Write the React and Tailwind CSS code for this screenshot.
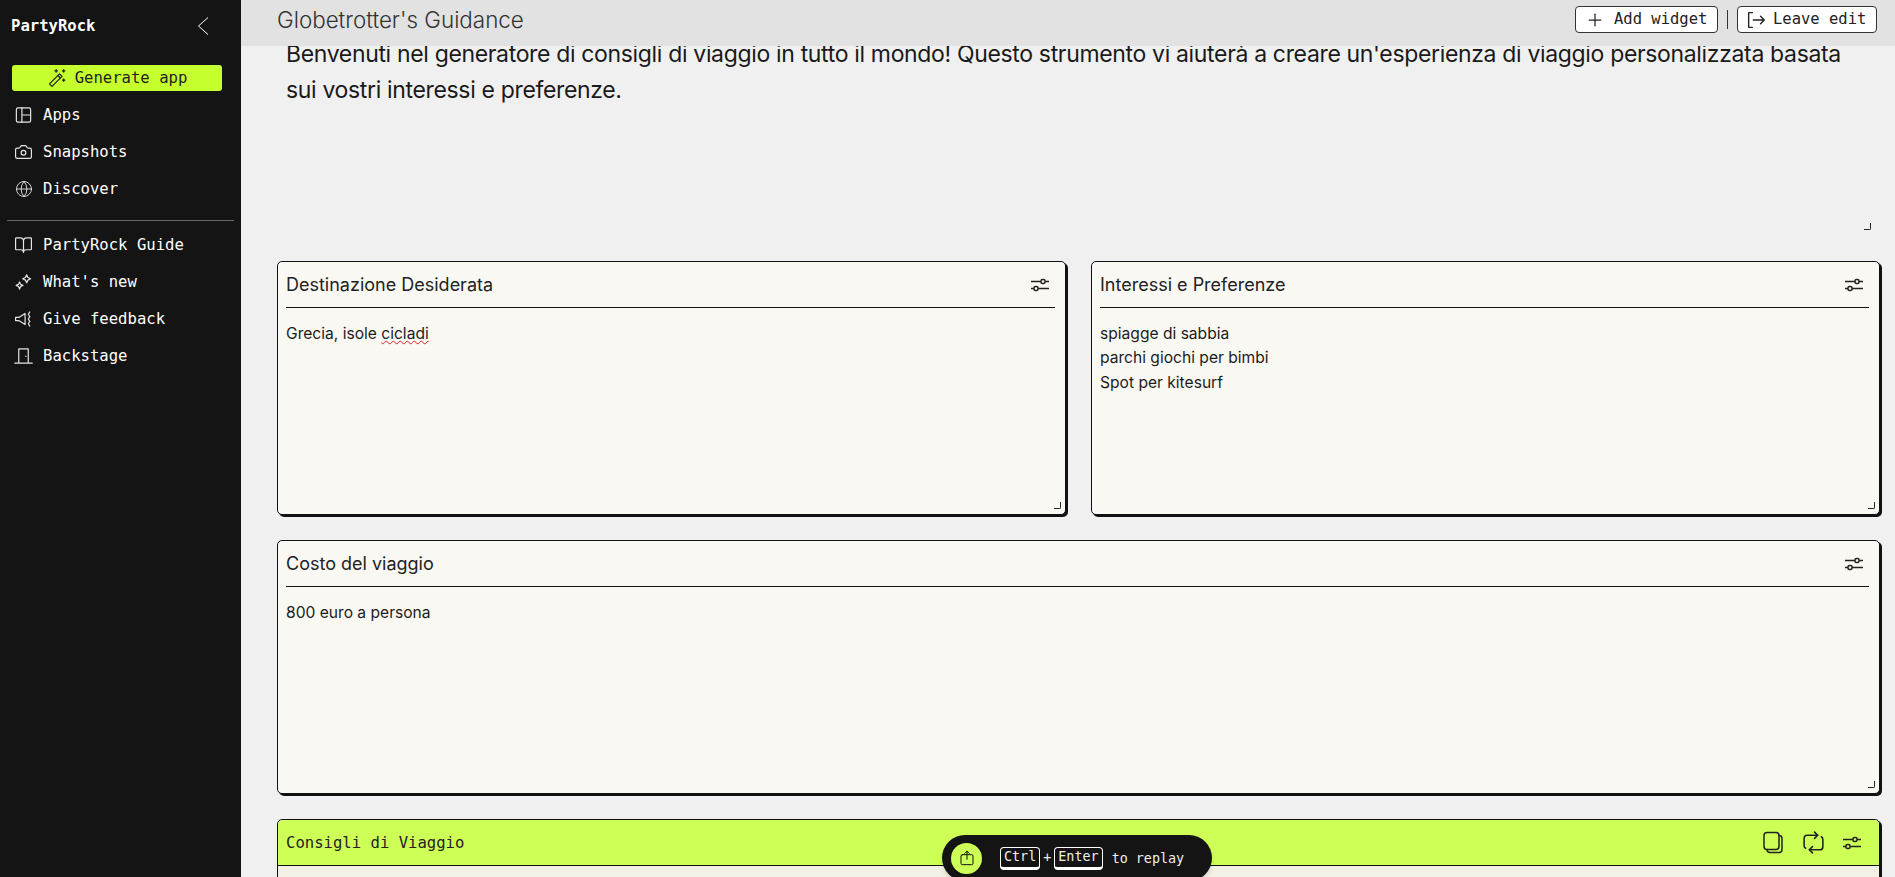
import { Camera, Globe, BookOpen, Plus } from "lucide-react";

const mono = "font-['DejaVu_Sans_Mono',monospace]";
const sans = "font-['Inter','Noto_Sans',sans-serif]";

const Icon = ({ children, className = "w-[20px] h-[20px]" }) => (
  <svg
    viewBox="0 0 24 24"
    fill="none"
    stroke="currentColor"
    strokeWidth="1.5"
    strokeLinecap="round"
    strokeLinejoin="round"
    className={className}
  >
    {children}
  </svg>
);

const AppsIcon = () => (
  <Icon>
    <rect x="3" y="3" width="18" height="18" rx="2" />
    <path d="M10 3v18M10 12h11" />
  </Icon>
);
const SparkleIcon = () => (
  <Icon>
    <path d="M16 3l1.600 3.400L21 8l-3.400 1.600L16 13l-1.600-3.400L11 8l3.400-1.600z" />
    <path d="M7 12l1.300 3 3 1.300-3 1.300L7 21l-1.300-3.400-3-1.300 3-1.300z" />
  </Icon>
);
const MegaphoneIcon = () => (
  <Icon>
    <path d="M2 10h4l8-5v14l-8-5H2z" />
    <path d="M20 3l-2 3 2 3-2 3 2 3-2 3 2 3" />
  </Icon>
);
const DoorIcon = () => (
  <Icon>
    <path d="M1 21h22M6 21V3h12v18" />
    <path d="M15 12v.5" />
  </Icon>
);
const WandIcon = () => (
  <Icon>
    <path d="M3 19L15 7l3 3L6 22z" />
    <path d="M13 9l3 3" />
    <path d="M11 2v3M9.500 3.500h3M20 2v3M18.500 3.500h3M20 13v3M18.500 14.500h3" />
  </Icon>
);
const ChevronIcon = () => (
  <svg viewBox="0 0 12 20" fill="none" stroke="currentColor" strokeWidth="1" className="w-[12px] h-[20px]">
    <path d="M11 1.500L1.500 10 11 18.500" />
  </svg>
);
const Sliders = () => (
  <svg viewBox="0 0 20 16" fill="none" stroke="currentColor" strokeWidth="1.5" className="w-[20px] h-[16px]">
    <path d="M1 4.500h10M15 4.500h4M1 11.500h3M8 11.500h11" />
    <rect x="11" y="2.500" width="4" height="4" rx="1.500" />
    <rect x="4" y="9.500" width="4" height="4" rx="1.500" />
  </svg>
);
const CopyIcon = () => (
  <Icon className="w-[24px] h-[25px]">
    <rect x="3" y="2" width="15" height="17" rx="3" />
    <path d="M18 5c2 0 3 1 3 3v11c0 2-1 3-3 3H9c-2 0-3-1-3-3" />
  </Icon>
);
const RepeatIcon = () => (
  <Icon className="w-[25px] h-[25px]">
    <path d="M13 2l3 3-3 3" />
    <path d="M16 5H6C4 5 3 6 3 8v7c0 1 .5 2 1.500 2.500" />
    <path d="M11 22l-3-3 3-3" />
    <path d="M8 19h10c2 0 3-1 3-3V9c0-1-.5-2-1.500-2.500" />
  </Icon>
);
const LeaveIcon = () => (
  <Icon className="w-[22px] h-[22px]">
    <path d="M8 4H4v16h4" />
    <path d="M9 12h12M17 8l4 4-4 4" />
  </Icon>
);
const ReplayIcon = () => (
  <Icon className="w-[16px] h-[16px]">
    <rect x="3" y="7" width="18" height="15" rx="2" />
    <path d="M12 14V2M8.500 5L12 2l3.500 3" />
  </Icon>
);

const NavItem = ({ icon, label }) => (
  <div className="flex items-center h-[37px] pl-[14px] gap-[10px] text-white">
    <span className="w-[19px] flex justify-center text-[#e5e5e5]">{icon}</span>
    <span className="pt-[3px]">{label}</span>
  </div>
);

const Handle = ({ className = "right-[4px] bottom-[5px]" }) => (
  <span className={`absolute w-[7px] h-[7px] border-r border-b border-[#222] rounded-br-[2px] ${className}`} />
);

const Card = ({ title, children, className = "h-[254px]" }) => (
  <div className={`relative bg-[#faf8f3] border border-[#111] rounded-[5px] shadow-[2px_2px_0_#111] pl-[8px] pr-[10px] ${className}`}>
    <div className="flex items-center justify-between h-[46px] border-b border-[#111] text-[18px] text-[#222]">
      <span>{title}</span>
      <span className="mr-[5px] text-[#222]"><Sliders /></span>
    </div>
    <div className="pt-[14px] text-[15.600px] leading-[24.400px] text-[#1c1c1c]">{children}</div>
    <Handle />
  </div>
);

export default function App() {
  return (
    <div className={`relative flex h-screen w-full overflow-hidden bg-[#f0f0f0] ${sans}`}>
      <aside className={`w-[241px] shrink-0 bg-[#141414] text-[15.600px] ${mono}`}>
        <div className="flex items-center justify-between h-[52px] pl-[11px] pr-[32px] text-white font-bold">
          <span className="pt-[1px]">PartyRock</span>
          <ChevronIcon />
        </div>
        <div className="ml-[12px] mr-[19px] mt-[13px] mb-[5px] h-[26px] rounded-[3px] bg-[#c6ff2e] flex items-center justify-center gap-[8px] text-[#222]">
          <WandIcon />
          <span className="pt-[2px]">Generate app</span>
        </div>
        <NavItem icon={<AppsIcon />} label="Apps" />
        <NavItem icon={<Camera className="w-[20px] h-[20px]" strokeWidth={1.5} />} label="Snapshots" />
        <NavItem icon={<Globe className="w-[18px] h-[18px]" strokeWidth={1.2} />} label="Discover" />
        <div className="mx-[7px] mt-[13px] mb-[5px] border-t border-[#666]" />
        <NavItem icon={<BookOpen className="w-[20px] h-[20px]" strokeWidth={1.5} />} label="PartyRock Guide" />
        <NavItem icon={<SparkleIcon />} label="What's new" />
        <NavItem icon={<MegaphoneIcon />} label="Give feedback" />
        <NavItem icon={<DoorIcon />} label="Backstage" />
      </aside>

      <main className="flex-1 min-w-0 flex flex-col">
        <header className="relative z-10 h-[46px] shrink-0 bg-[#e2e2e2] flex items-start justify-between pt-[6px] pl-[36px] pr-[18px]">
          <h1 className="text-[22.400px] leading-[27px] font-light text-[#333]">Globetrotter's Guidance</h1>
          <div className={`flex items-center text-[15.500px] text-[#222] ${mono}`}>
            <button className="flex items-center gap-[9px] h-[27px] w-[143px] pl-[9px] bg-white border border-[#333] rounded-[4px]">
              <Plus className="w-[20px] h-[20px]" strokeWidth={1.5} />
              Add widget
            </button>
            <span className="mx-[9px] h-[19px] border-l border-[#333]" />
            <button className="flex items-center gap-[6px] h-[27px] w-[140px] pl-[7px] bg-white border border-[#333] rounded-[4px]">
              <LeaveIcon />
              Leave edit
            </button>
          </div>
        </header>

        <div className="flex-1 min-h-0 overflow-hidden pl-[36px] pr-[15px] -mt-[10px]">
          <section className="relative h-[200px] px-[9px] text-[23px] tracking-[-0.34px] leading-[36px] text-[#1a1a1a]">
            Benvenuti nel generatore di consigli di viaggio in tutto il mondo! Questo strumento vi aiuterà a creare un'esperienza di viaggio personalizzata basata sui vostri interessi e preferenze.
            <Handle className="right-[9px] bottom-[6px]" />
          </section>
          <div className="mt-[25px] grid grid-cols-2 gap-[25px]">
            <Card title="Destinazione Desiderata">
              Grecia, isole <span className="underline decoration-wavy decoration-[#e0202a] decoration-1">cicladi</span>
            </Card>
            <Card title="Interessi e Preferenze">
              spiagge di sabbia
              <br />
              parchi giochi per bimbi
              <br />
              Spot per kitesurf
            </Card>
            <div className="col-span-2">
              <Card title="Costo del viaggio">800 euro a persona</Card>
            </div>
            <div className="col-span-2 h-[254px] bg-[#f3f0e6] border border-[#111] rounded-[5px] shadow-[2px_2px_0_#111]">
              <div className="flex items-center justify-between h-[46px] pl-[8px] pr-[17px] bg-[#cdff57] border-b border-[#111] rounded-t-[5px] text-[#222]">
                <span className={`pt-[2px] text-[15.600px] ${mono}`}>Consigli di Viaggio</span>
                <div className="flex items-center gap-[16px]">
                  <CopyIcon />
                  <RepeatIcon />
                  <Sliders />
                </div>
              </div>
            </div>
          </div>
        </div>
      </main>

      <div className={`absolute left-[942px] -bottom-[4px] w-[270px] h-[46px] rounded-[23px] bg-[#141414] shadow-md flex items-center pl-[9px] text-[13.400px] text-[#f0f0e8] ${mono}`}>
        <span className="w-[31px] h-[31px] rounded-full bg-[#cdff57] text-[#111] flex items-center justify-center">
          <ReplayIcon />
        </span>
        <kbd className={`ml-[18px] px-[3px] h-[23px] flex items-center border border-white border-b-[3px] rounded-[4px] ${mono}`}>Ctrl</kbd>
        <span className="mx-[3px]">+</span>
        <kbd className={`px-[3px] h-[23px] flex items-center border border-white border-b-[3px] rounded-[4px] ${mono}`}>Enter</kbd>
        <span className="ml-[9px] pt-[2px]">to replay</span>
      </div>
    </div>
  );
}
